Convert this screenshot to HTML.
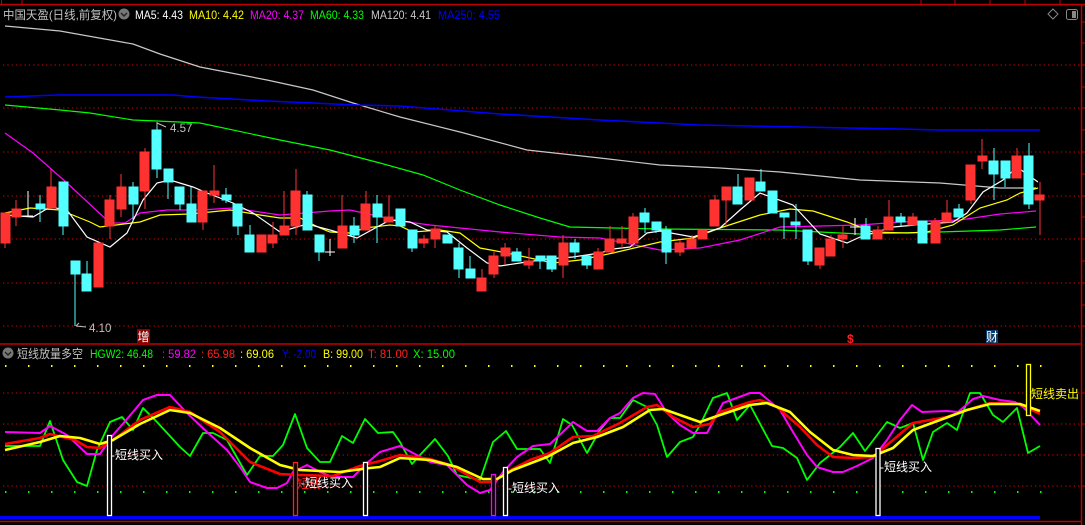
<!DOCTYPE html>
<html><head><meta charset="utf-8"><style>
html,body{margin:0;padding:0;background:#000;width:1085px;height:525px;overflow:hidden}
svg{display:block}
text{font-family:"Liberation Sans","Noto Sans CJK SC",sans-serif}
</style></head><body>
<svg width="1085" height="525" viewBox="0 0 1085 525" xmlns="http://www.w3.org/2000/svg">
<rect width="1085" height="525" fill="#000"/>
<g stroke="#c00000" stroke-width="1.5" fill="none">
<line x1="0" y1="4.5" x2="1085" y2="4.5"/>
<line x1="1081.5" y1="4" x2="1081.5" y2="525"/>
<line x1="0" y1="344" x2="1082" y2="344"/>
<line x1="0" y1="521.5" x2="1082" y2="521.5"/>
</g>
<g stroke="#c00000" stroke-width="1">
<line x1="1.5" y1="0" x2="1.5" y2="4"/><line x1="22" y1="0" x2="22" y2="4"/>
<line x1="921" y1="0" x2="921" y2="4"/><line x1="955" y1="0" x2="955" y2="4"/><line x1="990" y1="0" x2="990" y2="4"/><line x1="1025" y1="0" x2="1025" y2="4"/><line x1="1060" y1="0" x2="1060" y2="4"/>
<line x1="1081" y1="22" x2="1085" y2="22"/><line x1="1081" y1="43" x2="1085" y2="43"/><line x1="1081" y1="65" x2="1085" y2="65"/><line x1="1081" y1="87" x2="1085" y2="87"/><line x1="1081" y1="108" x2="1085" y2="108"/><line x1="1081" y1="130" x2="1085" y2="130"/><line x1="1081" y1="152" x2="1085" y2="152"/><line x1="1081" y1="174" x2="1085" y2="174"/><line x1="1081" y1="196" x2="1085" y2="196"/><line x1="1081" y1="217" x2="1085" y2="217"/><line x1="1081" y1="239" x2="1085" y2="239"/><line x1="1081" y1="261" x2="1085" y2="261"/><line x1="1081" y1="283" x2="1085" y2="283"/><line x1="1081" y1="305" x2="1085" y2="305"/><line x1="1081" y1="326" x2="1085" y2="326"/>
<line x1="1081" y1="393" x2="1085" y2="393"/><line x1="1081" y1="424" x2="1085" y2="424"/><line x1="1081" y1="455" x2="1085" y2="455"/><line x1="1081" y1="486" x2="1085" y2="486"/>
</g>
<g stroke="#b00000" stroke-width="1.3" stroke-dasharray="1.3 3">
<line x1="3" y1="65" x2="1080" y2="65"/><line x1="3" y1="108" x2="1080" y2="108"/><line x1="3" y1="152" x2="1080" y2="152"/><line x1="3" y1="196" x2="1080" y2="196"/><line x1="3" y1="239" x2="1080" y2="239"/><line x1="3" y1="283" x2="1080" y2="283"/><line x1="3" y1="326" x2="1080" y2="326"/>
<line x1="3" y1="393" x2="1080" y2="393"/><line x1="3" y1="424" x2="1080" y2="424"/><line x1="3" y1="455" x2="1080" y2="455"/><line x1="3" y1="486" x2="1080" y2="486"/>
</g>
<line x1="5" y1="366" x2="1045" y2="366" stroke="#ffff00" stroke-width="2" stroke-dasharray="1.5 21.5"/>
<line x1="5" y1="492" x2="1045" y2="492" stroke="#00ff00" stroke-width="2" stroke-dasharray="1.5 21.5"/>

<g fill="none" stroke-width="1.2">
<polyline stroke="#c8c8c8" points="5,26 60,31 133,44 160,54 200,67 267,80 313,90 353,103 400,117 460,132 527,150 600,158 660,165 720,168 780,172 860,180 940,183 1000,188 1036,188"/>
<polyline stroke="#0000ff" stroke-width="1.6" points="5,97 57,95 173,95 197,97 233,99 267,101 313,103 357,105 400,106 500,114 600,120 700,125 800,127 900,129 940,130 1040,130"/>
<polyline stroke="#00ff00" points="5,105 60,110 90,113 133,120 157,121 200,123 280,140 330,150 380,163 423,175 460,190 500,205 540,218 570,227 660,229 780,230 860,234 940,232 1000,230 1036,227"/>
<polyline stroke="#ff00ff" points="5,133 33,153 67,183 110,223 125,223 140,213 167,210 200,210 233,208 280,215 330,211 350,210 400,221 430,225 460,228 500,232 560,237 600,238 640,246 660,250 700,248 740,240 780,227 860,225 900,222 960,220 1000,214 1036,211"/>
<polyline stroke="#ffff00" points="5,213 30,208 60,210 90,222 100,227 140,222 160,215 190,214 230,210 260,215 280,218 300,218 320,228 330,232 350,233 365,228 390,225 400,226 413,232 440,230 460,233 480,248 507,253 553,263 580,260 613,253 660,242 693,238 720,228 760,215 790,209 813,211 847,222 873,232 907,233 927,232 953,225 980,208 1007,200 1020,193 1038,188"/>
<polyline stroke="#ffffff" points="5,215 33,217 50,207 67,210 87,237 110,247 127,233 143,200 157,183 170,180 193,187 207,193 233,203 253,213 280,232 307,224 330,230 357,238 390,220 410,222 427,230 447,232 467,248 487,263 500,266 520,263 547,259 573,257 600,253 613,249 630,247 647,233 660,231 693,237 720,228 740,210 760,193 793,205 807,220 820,234 847,243 860,237 893,227 927,224 953,222 967,213 983,192 1003,180 1017,167 1038,182"/>
</g>

<g stroke-width="1">
<g stroke="#ff3232" fill="#ff3232">
<line x1="5" y1="213" x2="5" y2="248"/><rect x="1" y="213" width="9" height="30"/>
<line x1="16" y1="200" x2="16" y2="226"/><rect x="12" y="209" width="9" height="8"/>
<line x1="51" y1="169" x2="51" y2="208"/><rect x="47" y="187" width="9" height="21"/>
<line x1="98" y1="243" x2="98" y2="287"/><rect x="94" y="243" width="9" height="44"/>
<line x1="110" y1="195" x2="110" y2="239"/><rect x="105" y="200" width="9" height="26"/>
<line x1="121" y1="174" x2="121" y2="217"/><rect x="117" y="187" width="9" height="22"/>
<line x1="145" y1="148" x2="145" y2="209"/><rect x="140" y="152" width="9" height="39"/>
<line x1="203" y1="191" x2="203" y2="230"/><rect x="198" y="191" width="9" height="31"/>
<line x1="214" y1="165" x2="214" y2="203"/><rect x="210" y="191" width="9" height="4"/>
<line x1="261" y1="235" x2="261" y2="252"/><rect x="257" y="235" width="9" height="17"/>
<line x1="273" y1="222" x2="273" y2="248"/><rect x="268" y="235" width="9" height="8"/>
<line x1="284" y1="191" x2="284" y2="235"/><rect x="280" y="226" width="9" height="9"/>
<line x1="296" y1="169" x2="296" y2="235"/><rect x="291" y="191" width="9" height="35"/>
<line x1="342" y1="195" x2="342" y2="248"/><rect x="338" y="226" width="9" height="22"/>
<line x1="366" y1="191" x2="366" y2="230"/><rect x="361" y="204" width="9" height="26"/>
<line x1="389" y1="195" x2="389" y2="222"/><rect x="384" y="217" width="9" height="5"/>
<line x1="424" y1="235" x2="424" y2="248"/><rect x="419" y="239" width="9" height="4"/>
<line x1="435" y1="226" x2="435" y2="248"/><rect x="431" y="229" width="9" height="10"/>
<line x1="482" y1="269" x2="482" y2="291"/><rect x="477" y="278" width="9" height="13"/>
<line x1="494" y1="252" x2="494" y2="278"/><rect x="489" y="256" width="9" height="18"/>
<line x1="505" y1="243" x2="505" y2="265"/><rect x="501" y="248" width="9" height="8"/>
<line x1="529" y1="248" x2="529" y2="269"/><rect x="524" y="261" width="9" height="4"/>
<line x1="563" y1="235" x2="563" y2="278"/><rect x="559" y="243" width="9" height="22"/>
<line x1="598" y1="248" x2="598" y2="269"/><rect x="594" y="252" width="9" height="17"/>
<line x1="610" y1="226" x2="610" y2="252"/><rect x="605" y="239" width="9" height="13"/>
<line x1="622" y1="226" x2="622" y2="248"/><rect x="617" y="239" width="9" height="4"/>
<line x1="633" y1="213" x2="633" y2="248"/><rect x="629" y="217" width="9" height="26"/>
<line x1="680" y1="240" x2="680" y2="256"/><rect x="675" y="243" width="9" height="9"/>
<line x1="692" y1="235" x2="692" y2="248"/><rect x="687" y="239" width="9" height="9"/>
<line x1="703" y1="230" x2="703" y2="239"/><rect x="698" y="230" width="9" height="9"/>
<line x1="715" y1="195" x2="715" y2="226"/><rect x="710" y="200" width="9" height="26"/>
<line x1="726" y1="187" x2="726" y2="226"/><rect x="722" y="187" width="9" height="13"/>
<line x1="750" y1="178" x2="750" y2="200"/><rect x="745" y="178" width="9" height="22"/>
<line x1="820" y1="248" x2="820" y2="269"/><rect x="815" y="248" width="9" height="17"/>
<line x1="831" y1="235" x2="831" y2="256"/><rect x="826" y="239" width="9" height="17"/>
<line x1="843" y1="226" x2="843" y2="248"/><rect x="838" y="235" width="9" height="4"/>
<line x1="878" y1="226" x2="878" y2="239"/><rect x="873" y="230" width="9" height="9"/>
<line x1="889" y1="200" x2="889" y2="230"/><rect x="884" y="217" width="9" height="13"/>
<line x1="913" y1="213" x2="913" y2="225"/><rect x="908" y="217" width="9" height="8"/>
<line x1="935" y1="218" x2="935" y2="243"/><rect x="931" y="221" width="9" height="22"/>
<line x1="947" y1="200" x2="947" y2="222"/><rect x="942" y="213" width="9" height="9"/>
<line x1="971" y1="165" x2="971" y2="204"/><rect x="966" y="165" width="9" height="35"/>
<line x1="982" y1="139" x2="982" y2="169"/><rect x="978" y="156" width="9" height="5"/>
<line x1="1017" y1="148" x2="1017" y2="178"/><rect x="1012" y="156" width="9" height="22"/>
<line x1="1040" y1="182" x2="1040" y2="235"/><rect x="1035" y="195" width="9" height="5"/>
</g>
<g stroke="#54ffff" fill="#54ffff">
<line x1="40" y1="195" x2="40" y2="222"/><rect x="36" y="204" width="9" height="5"/>
<line x1="63" y1="182" x2="63" y2="235"/><rect x="59" y="182" width="9" height="44"/>
<line x1="75" y1="261" x2="75" y2="326"/><rect x="71" y="261" width="9" height="13"/>
<line x1="87" y1="261" x2="87" y2="291"/><rect x="82" y="274" width="9" height="17"/>
<line x1="133" y1="182" x2="133" y2="222"/><rect x="129" y="187" width="9" height="17"/>
<line x1="157" y1="122" x2="157" y2="178"/><rect x="152" y="130" width="9" height="39"/>
<line x1="168" y1="169" x2="168" y2="199"/><rect x="164" y="169" width="9" height="13"/>
<line x1="180" y1="187" x2="180" y2="210"/><rect x="175" y="187" width="9" height="17"/>
<line x1="191" y1="187" x2="191" y2="222"/><rect x="187" y="204" width="9" height="18"/>
<line x1="226" y1="188" x2="226" y2="203"/><rect x="222" y="195" width="9" height="5"/>
<line x1="238" y1="204" x2="238" y2="235"/><rect x="233" y="204" width="9" height="22"/>
<line x1="250" y1="225" x2="250" y2="252"/><rect x="245" y="235" width="9" height="17"/>
<line x1="307" y1="191" x2="307" y2="230"/><rect x="303" y="195" width="9" height="35"/>
<line x1="319" y1="235" x2="319" y2="261"/><rect x="315" y="235" width="9" height="17"/>
<line x1="354" y1="217" x2="354" y2="243"/><rect x="350" y="226" width="9" height="9"/>
<line x1="377" y1="195" x2="377" y2="243"/><rect x="373" y="204" width="9" height="13"/>
<line x1="400" y1="209" x2="400" y2="226"/><rect x="396" y="209" width="9" height="17"/>
<line x1="412" y1="230" x2="412" y2="252"/><rect x="408" y="230" width="9" height="18"/>
<line x1="447" y1="235" x2="447" y2="243"/><rect x="443" y="235" width="9" height="8"/>
<line x1="459" y1="243" x2="459" y2="278"/><rect x="454" y="248" width="9" height="21"/>
<line x1="470" y1="256" x2="470" y2="278"/><rect x="466" y="269" width="9" height="9"/>
<line x1="517" y1="248" x2="517" y2="261"/><rect x="512" y="252" width="9" height="9"/>
<line x1="540" y1="256" x2="540" y2="269"/><rect x="536" y="256" width="9" height="5"/>
<line x1="552" y1="256" x2="552" y2="272"/><rect x="547" y="256" width="9" height="13"/>
<line x1="575" y1="239" x2="575" y2="259"/><rect x="570" y="243" width="9" height="9"/>
<line x1="587" y1="256" x2="587" y2="269"/><rect x="582" y="256" width="9" height="9"/>
<line x1="645" y1="208" x2="645" y2="233"/><rect x="640" y="213" width="9" height="9"/>
<line x1="656" y1="222" x2="656" y2="233"/><rect x="652" y="222" width="9" height="8"/>
<line x1="666" y1="226" x2="666" y2="264"/><rect x="662" y="230" width="9" height="22"/>
<line x1="738" y1="174" x2="738" y2="204"/><rect x="733" y="187" width="9" height="17"/>
<line x1="761" y1="169" x2="761" y2="191"/><rect x="756" y="182" width="9" height="9"/>
<line x1="773" y1="191" x2="773" y2="213"/><rect x="768" y="191" width="9" height="22"/>
<line x1="784" y1="213" x2="784" y2="239"/><rect x="780" y="213" width="9" height="4"/>
<line x1="796" y1="204" x2="796" y2="239"/><rect x="791" y="222" width="9" height="3"/>
<line x1="808" y1="230" x2="808" y2="265"/><rect x="803" y="230" width="9" height="31"/>
<line x1="866" y1="218" x2="866" y2="239"/><rect x="861" y="226" width="9" height="13"/>
<line x1="901" y1="213" x2="901" y2="226"/><rect x="896" y="217" width="9" height="5"/>
<line x1="923" y1="221" x2="923" y2="243"/><rect x="918" y="221" width="9" height="22"/>
<line x1="959" y1="204" x2="959" y2="217"/><rect x="954" y="209" width="9" height="8"/>
<line x1="994" y1="148" x2="994" y2="200"/><rect x="989" y="161" width="9" height="13"/>
<line x1="1005" y1="161" x2="1005" y2="187"/><rect x="1001" y="161" width="9" height="17"/>
<line x1="1029" y1="143" x2="1029" y2="209"/><rect x="1024" y="156" width="9" height="48"/>
</g>
<g stroke="#ffffff">
<line x1="28" y1="191" x2="28" y2="217"/><line x1="23" y1="216" x2="33" y2="216"/>
<line x1="330" y1="239" x2="330" y2="256"/><line x1="325" y1="252" x2="335" y2="252"/>
<line x1="855" y1="218" x2="855" y2="235"/><line x1="850" y1="227" x2="860" y2="227"/>
</g>
</g>

<g stroke="#c0c0c0" stroke-width="1" fill="none">
<polyline points="157,122 157,126"/><polyline points="157,123 166,127"/>
<polyline points="76,326 86,327"/><polyline points="76,326 79,323"/>
</g>
<text x="170" y="132" font-size="11.5" fill="#c0c0c0">4.57</text>
<text x="89" y="332" font-size="11.5" fill="#c0c0c0">4.10</text>
<rect x="137" y="329" width="13" height="14" fill="#8b0000"/>
<text x="137.5" y="341" font-size="12" fill="#ffffff">增</text>
<text x="847" y="343" font-size="12" fill="#ff2020" font-weight="bold">$</text>
<rect x="986" y="330" width="12" height="13" fill="#0c3c6c"/>
<text x="986" y="341" font-size="12" fill="#ffffff">财</text>

<rect x="0" y="6" width="510" height="16" fill="#000"/>
<text x="3" y="19" font-size="12" fill="#c0c0c0" textLength="114" lengthAdjust="spacingAndGlyphs">中国天盈(日线,前复权)</text>
<circle cx="124" cy="14" r="5.5" fill="#777"/><path d="M121 13 L124 16 L127 13" stroke="#222" stroke-width="1.4" fill="none"/>
<g font-size="11.5">
<text x="135" y="19" fill="#ffffff" textLength="48" lengthAdjust="spacingAndGlyphs">MA5: 4.43</text>
<text x="189" y="19" fill="#ffff00" textLength="55" lengthAdjust="spacingAndGlyphs">MA10: 4.42</text>
<text x="250" y="19" fill="#ff00ff" textLength="54" lengthAdjust="spacingAndGlyphs">MA20: 4.37</text>
<text x="310" y="19" fill="#00ff00" textLength="54" lengthAdjust="spacingAndGlyphs">MA60: 4.33</text>
<text x="371" y="19" fill="#c8c8c8" textLength="60" lengthAdjust="spacingAndGlyphs">MA120: 4.41</text>
<text x="438" y="19" fill="#0000ff" textLength="62" lengthAdjust="spacingAndGlyphs">MA250: 4.55</text>
</g>
<path d="M1053 9 L1058 14 L1053 19 L1048 14 Z" stroke="#888" fill="none" stroke-width="1"/>
<rect x="1066.5" y="9.5" width="11" height="10" rx="2" stroke="#888" fill="none"/>
<rect x="1072" y="11" width="4" height="7" fill="#888"/>

<circle cx="8" cy="353" r="5.5" fill="#777"/><path d="M5 352 L8 355 L11 352" stroke="#222" stroke-width="1.4" fill="none"/>
<text x="17" y="358" font-size="12" fill="#c0c0c0" textLength="66" lengthAdjust="spacingAndGlyphs">短线放量多空</text>
<g font-size="11.5">
<text x="90" y="358" fill="#00ff00" textLength="63" lengthAdjust="spacingAndGlyphs">HGW2: 46.48</text>
<text x="162" y="358" fill="#ff00ff" textLength="34" lengthAdjust="spacingAndGlyphs">: 59.82</text>
<text x="201" y="358" fill="#ff2020" textLength="34" lengthAdjust="spacingAndGlyphs">: 65.98</text>
<text x="240" y="358" fill="#ffff00" textLength="34" lengthAdjust="spacingAndGlyphs">: 69.06</text>
<text x="282" y="358" fill="#0000ff" textLength="34" lengthAdjust="spacingAndGlyphs">Y: -2.00</text>
<text x="323" y="358" fill="#ffff00" textLength="40" lengthAdjust="spacingAndGlyphs">B: 99.00</text>
<text x="368" y="358" fill="#ff2020" textLength="40" lengthAdjust="spacingAndGlyphs">T: 81.00</text>
<text x="413" y="358" fill="#00ff00" textLength="42" lengthAdjust="spacingAndGlyphs">X: 15.00</text>
</g>

<g fill="none" stroke-linejoin="round">
<polyline stroke="#00ff00" stroke-width="1.8" points="5,446 40,446 50,421 63,460 77,482 87,486 97,450 110,422 122,417 133,430 143,408 157,422 180,447 190,456 203,433 213,433 227,440 247,475 260,456 273,456 283,445 295,414 307,448 320,462 330,462 342,436 353,443 365,419 378,433 393,432 400,442 412,464 420,455 435,439 448,456 457,475 480,480 493,442 506,431 517,449 540,449 550,463 563,419 572,425 587,453 600,430 610,418 620,418 633,400 647,407 657,425 667,457 680,442 693,437 700,425 713,398 727,393 737,420 750,405 772,446 783,448 797,458 807,480 820,463 840,447 853,433 865,451 887,422 900,428 913,423 923,460 933,432 947,423 957,430 970,393 980,393 993,415 1003,422 1017,408 1028,453 1040,446"/>
<polyline stroke="#ff00ff" stroke-width="2" points="5,432 40,433 50,426 67,435 87,454 100,454 113,435 127,419 143,400 157,395 170,395 187,413 207,432 227,450 240,467 250,482 267,488 277,488 287,483 293,472 307,465 320,472 333,477 353,477 367,463 380,452 400,446 413,453 430,462 447,465 467,485 480,493 490,490 503,472 517,457 533,446 550,444 567,428 573,422 587,431 597,431 610,418 620,413 633,398 643,393 655,394 667,413 680,425 693,433 707,433 723,403 750,393 760,393 780,410 793,432 807,455 817,467 833,472 843,472 857,466 873,458 887,440 900,420 912,405 922,412 947,411 958,412 973,399 983,396 1000,400 1015,402 1023,407 1040,425"/>
<polyline stroke="#ff0000" stroke-width="2.6" points="5,444 40,438 50,434 75,440 87,447 100,448 113,440 140,420 170,407 190,412 220,432 250,462 280,474 300,475 333,476 360,466 380,461 400,455 430,459 450,465 480,482 493,482 507,472 530,460 550,453 573,437 593,436 620,423 647,407 657,405 673,417 693,427 710,424 720,412 750,402 760,400 777,407 800,427 817,445 833,457 853,458 873,457 893,440 913,423 947,417 967,410 990,403 1020,404 1040,414"/>
<polyline stroke="#ffff00" stroke-width="2.6" points="5,450 40,442 60,436 80,438 100,444 113,440 140,424 170,410 190,413 220,428 250,448 280,465 300,470 340,472 370,468 380,467 400,458 430,460 457,467 483,479 497,479 513,470 547,457 573,443 597,437 623,427 650,410 663,409 680,415 700,422 720,415 750,405 767,403 790,412 810,432 833,450 853,455 873,456 893,448 913,430 940,420 967,410 990,404 1020,404 1040,411"/>
</g>

<rect x="0" y="516" width="1040" height="3.5" fill="#0000ff"/>
<g fill="#000" stroke-width="1.3">
<rect x="107.5" y="435.5" width="4" height="80" stroke="#ffffff"/>
<rect x="293.5" y="462.5" width="4" height="53" stroke="#ff2020"/>
<rect x="363.5" y="462.5" width="4" height="53" stroke="#ffffff"/>
<rect x="491.5" y="474.5" width="4" height="41" stroke="#ff00ff"/>
<rect x="503.5" y="467.5" width="4" height="48" stroke="#ffffff"/>
<rect x="876" y="448.5" width="4" height="67" stroke="#ffffff"/>
<rect x="1026.5" y="364.5" width="4" height="51" stroke="#ffff00"/>
</g>
<g font-size="12">
<text x="111" y="459" fill="#ffffff">-短线买入</text>
<text x="297" y="488" fill="#ff2020">短线</text>
<text x="301" y="487" fill="#ffffff">-短线买入</text>
<text x="508" y="492" fill="#ffffff">-短线买入</text>
<text x="880" y="471" fill="#ffffff">-短线买入</text>
<text x="1031" y="398" fill="#ffff00">短线卖出</text>
</g>
</svg>
</body></html>
